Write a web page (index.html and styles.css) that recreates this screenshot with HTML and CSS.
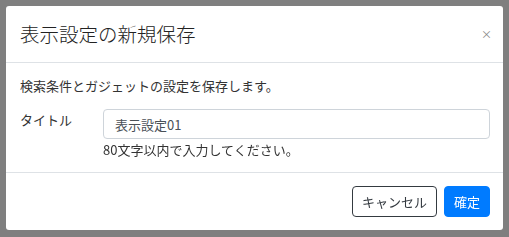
FILE: index.html
```html
<!DOCTYPE html>
<html lang="ja">
 <head>
  <meta charset="utf-8">
  <title>表示設定の新規保存</title>
  <link rel="stylesheet" href="styles.css">
 </head>
 <body>
  <div class="backdrop"></div>

  <div class="modal">
   <div class="modal-header">
    <h5 class="modal-title">表示設定の新規保存</h5>
    <span class="close">&times;</span>
   </div>
   <div class="modal-body">
    <p class="lead">検索条件とガジェットの設定を保存します。</p>
    <div class="formrow">
     <label class="formlabel" for="title">タイトル</label>
     <div class="formfield">
      <input id="title" class="textbox" type="text" value="表示設定01">
      <div class="helptext">80文字以内で入力してください。</div>
     </div>
    </div>
   </div>
   <div class="modal-footer">
    <button class="btn btn-cancel" type="button">キャンセル</button>
    <button class="btn btn-ok" type="button">確定</button>
   </div>
  </div>
 </body>
</html>
```

FILE: styles.css
```css
html, body {
    margin: 0;
    padding: 0;
    height: 100%;
    overflow: hidden;
}
body {
    font-family: "Noto Sans CJK JP", "Noto Sans", sans-serif;
    font-size: 13px;
    color: #333;
    background: #fff;
}

.backdrop {
    position: fixed;
    left: 0; top: 0; right: 0; bottom: 0;
    background: rgba(0, 0, 0, 0.5);
}

.modal {
    position: absolute;
    left: 6px;
    top: 6px;
    width: 497px;
    height: 224px;
    background: #fff;
    border-radius: 3px;
    box-sizing: border-box;
    display: flex;
    flex-direction: column;
}
.modal-header {
    display: flex;
    align-items: center;
    justify-content: space-between;
    height: 56px;
    padding: 0 14px;
    border-bottom: 1px solid #dee2e6;
}
.modal-title {
    margin: 0;
    font-size: 19.5px;
    font-weight: 300;
    line-height: 24px;
    color: #222;
}
.close {
    font-size: 11px;
    line-height: 12px;
    color: #888;
    margin-right: -3px;
}

.modal-body {
    padding: 13px 13px 12px 14px;
}
.lead {
    margin: 0 0 13px 0;
    line-height: 20px;
}
.formrow {
    display: flex;
}
.formlabel {
    width: 83px;
    flex-shrink: 0;
    line-height: 20px;
    padding-top: 1px;
}
.formfield {
    flex: 1;
}
.textbox {
    display: block;
    width: 100%;
    height: 30px;
    box-sizing: border-box;
    padding: 0 11px;
    border: 1px solid #ced4da;
    border-radius: 4px;
    font-family: inherit;
    font-size: 13px;
    color: #495057;
    background: #fff;
}
.helptext {
    margin-top: 1px;
    line-height: 20px;
}

.modal-footer {
    display: flex;
    justify-content: flex-end;
    gap: 7px;
    padding: 13px 13px 0 0;
    border-top: 1px solid #dee2e6;
}
.btn {
    height: 31px;
    padding: 0 9px;
    font-family: inherit;
    font-size: 13px;
    border-radius: 4px;
    box-sizing: border-box;
}
.btn-cancel {
    background: #fff;
    color: #343a40;
    border: 1px solid #343a40;
}
.btn-ok {
    background: #007bff;
    color: #fff;
    border: 1px solid #007bff;
}
```
